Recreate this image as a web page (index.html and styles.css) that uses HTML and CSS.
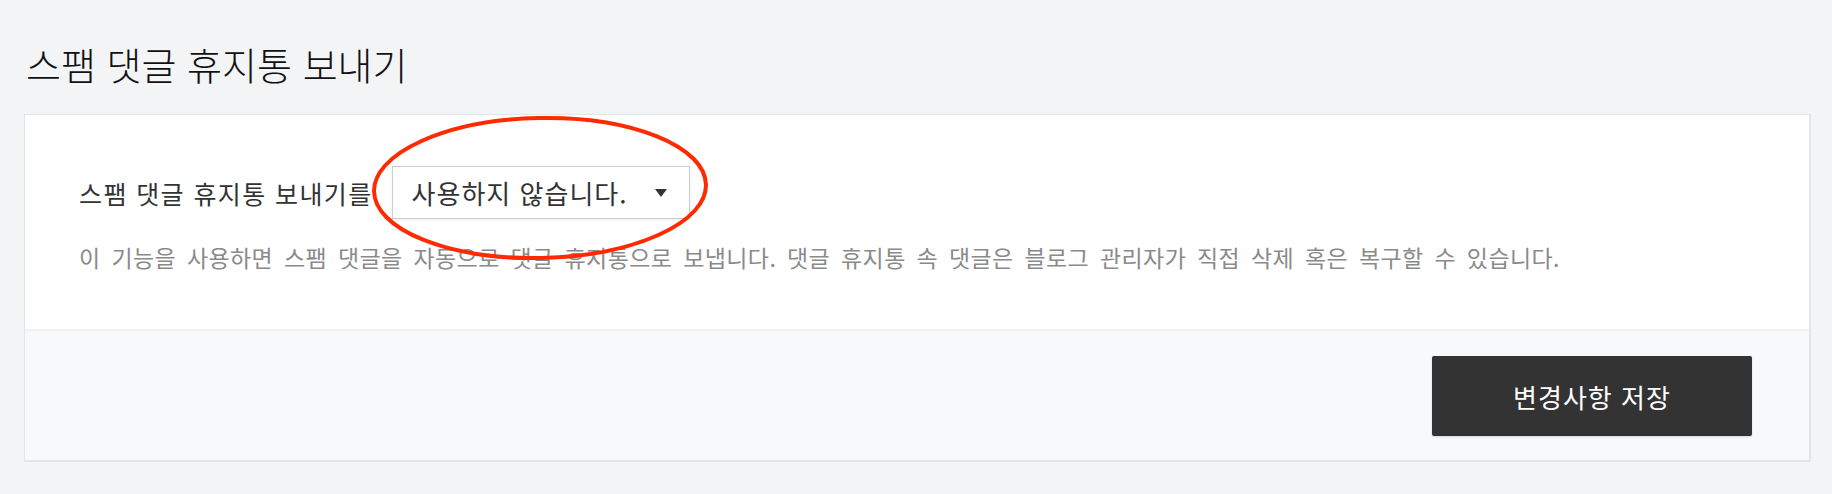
FILE: index.html
```html
<!DOCTYPE html>
<html lang="ko">
<head>
<meta charset="utf-8">
<title>스팸 댓글 휴지통 보내기</title>
<link rel="stylesheet" href="styles.css">
</head>
<body>
<div class="page">
  <h2 class="title">스팸 댓글 휴지통 보내기</h2>
  <section class="card">
    <div class="card-body">
      <div class="field">
        <label class="field-label">스팸 댓글 휴지통 보내기를</label>
        <div class="select-wrap">
          <div class="select">
            <span class="select-text">사용하지 않습니다.</span>
            <span class="select-arrow"></span>
          </div>
          <svg class="highlight" width="340" height="148" viewBox="0 0 340 148" aria-hidden="true">
            <ellipse cx="170" cy="74" rx="166" ry="70" fill="none" stroke="#ff2a00" stroke-width="4" transform="rotate(-1.2 170 74)"/>
          </svg>
        </div>
      </div>
      <p class="desc">이 기능을 사용하면 스팸 댓글을 자동으로 댓글 휴지통으로 보냅니다. 댓글 휴지통 속 댓글은 블로그 관리자가 직접 삭제 혹은 복구할 수 있습니다.</p>
    </div>
    <div class="card-footer">
      <button class="btn-save" type="button">변경사항 저장</button>
    </div>
  </section>
</div>
</body>
</html>
```

FILE: styles.css
```css
* { box-sizing: border-box; }
html, body { margin: 0; padding: 0; }
body {
  background: #f3f4f6;
  font-family: "Noto Sans CJK KR", "Noto Sans", sans-serif;
  color: #333;
  width: 1832px;
  height: 494px;
  overflow: hidden;
}
.page {
  padding: 36px 21px 0 24px;
}
.title {
  margin: 0 0 22px 2px;
  font-size: 38px;
  line-height: 56px;
  font-weight: 300;
  color: #111;
}
.card {
  background: #fff;
  border: 1px solid #e1e5ec;
  border-bottom-width: 2px;
  border-right-width: 2px;
}
.card-body {
  padding: 51px 54px 0 54px;
  height: 216px;
  border-bottom: 2px solid #eff1f5;
}
.field {
  display: flex;
  align-items: center;
  gap: 19px;
}
.field-label {
  font-size: 25px;
  line-height: 32px;
  letter-spacing: 1.4px;
  color: #333;
}
.select-wrap {
  position: relative;
}
.select {
  width: 298px;
  height: 53px;
  border: 1px solid #c8ced8;
  box-shadow: 0 1px 2px rgba(0, 0, 0, 0.08);
  background: #fff;
  display: flex;
  align-items: center;
  justify-content: space-between;
  padding: 0 22px 0 19px;
}
.select-text {
  font-size: 26px;
  line-height: 32px;
  letter-spacing: 1px;
  color: #333;
}
.select-arrow {
  width: 0;
  height: 0;
  border-left: 6px solid transparent;
  border-right: 6px solid transparent;
  border-top: 8px solid #333;
}
.highlight {
  position: absolute;
  left: -22px;
  top: -52px;
  pointer-events: none;
}
.desc {
  margin: 23px 0 0 0;
  font-size: 23px;
  line-height: 30px;
  letter-spacing: 0.4px;
  word-spacing: 4px;
  color: #8a8a8a;
}
.card-footer {
  background: #f8f9fb;
  display: flex;
  justify-content: flex-end;
  padding: 25px 57px 24px 0;
}
.btn-save {
  width: 320px;
  height: 80px;
  background: #333;
  color: #fff;
  border: none;
  border-radius: 2px;
  box-shadow: 0 1px 2px rgba(0, 0, 0, 0.15);
  font-family: "Noto Sans CJK KR", "Noto Sans", sans-serif;
  font-size: 26px;
  letter-spacing: 1px;
  font-weight: 400;
  padding: 0;
}
```
